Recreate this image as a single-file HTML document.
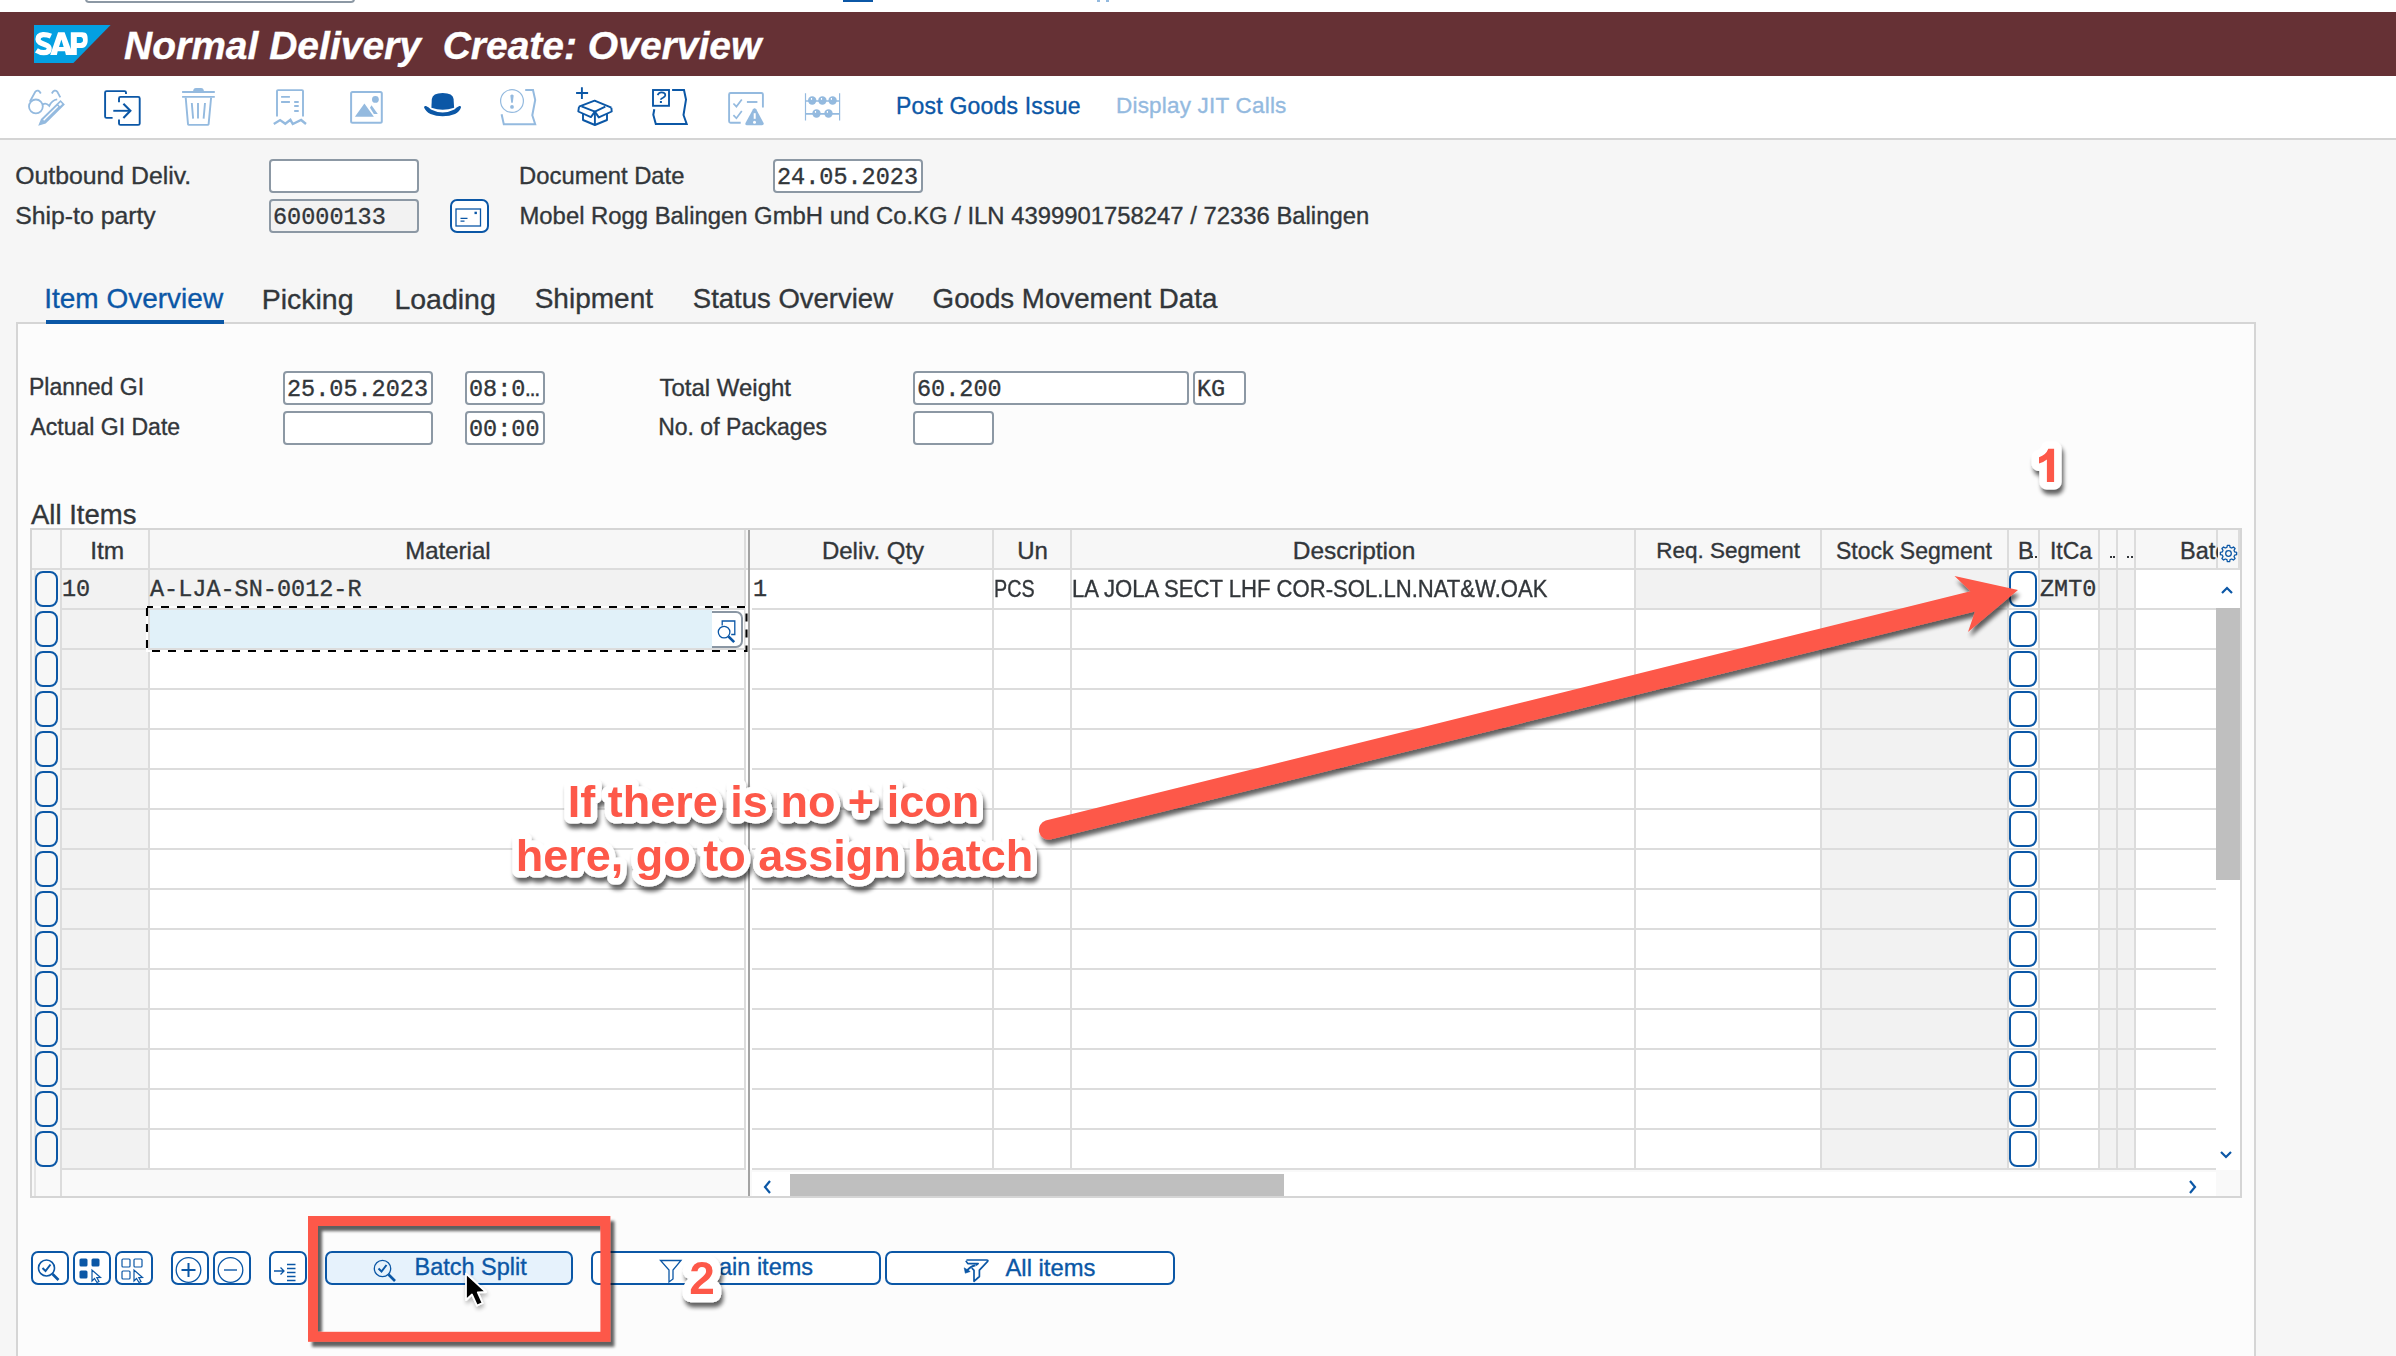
<!DOCTYPE html>
<html><head><meta charset="utf-8">
<style>
html,body{margin:0;padding:0;}
body{width:2396px;height:1356px;overflow:hidden;position:relative;background:#f6f6f6;font-family:'Liberation Sans', sans-serif;}
.t{position:absolute;white-space:nowrap;line-height:1;-webkit-text-stroke:0.35px currentColor;}
</style></head><body>
<div style="position:absolute;left:0px;top:0px;width:2396px;height:12px;background:#fff"></div>
<div style="position:absolute;left:85px;top:-20px;width:270px;height:23px;border:2px solid #8c98a4;border-radius:4px;background:#fff;box-sizing:border-box"></div>
<div style="position:absolute;left:843px;top:0px;width:30px;height:2px;background:#0b57a6"></div>
<div style="position:absolute;left:1097px;top:0px;width:3px;height:2px;background:#94badf"></div>
<div style="position:absolute;left:1106px;top:0px;width:3px;height:2px;background:#94badf"></div>
<div style="position:absolute;left:0px;top:12px;width:2396px;height:64px;background:#663135"></div>
<svg style="position:absolute;left:34px;top:25px" width="77" height="38" viewBox="0 0 77 38">
<polygon points="0,0 76.6,0 39.4,37.9 0,37.9" fill="#03a0e2"/>
<path fill="#fff" fill-rule="evenodd" d="M24.05 7.2 L30.6 7.2 L36.8 23.9 L36.8 7.2 L48.1 7.2 C53.5 7.2 53.7 10.5 53.7 15.1 C53.7 20.5 51 23 48.1 23 L42.8 23 L42.8 29.9 L31.9 29.9 L31 26.2 L23.7 26.2 L22.9 29.9 L16.2 29.9 Z M27.4 14.5 L25 21.9 L29.7 21.9 Z M42.8 12.1 L46.6 12.1 C48.3 12.1 49 13.5 49 15.1 C49 16.8 48.3 17.9 46.6 17.9 L42.8 17.9 Z"/>
<path fill="none" stroke="#fff" stroke-width="5.2" d="M16.9 11.2 C13.5 9.6 11 9.5 9 9.6 C5.5 9.9 4 11.8 4 14.3 C4 17 6 18 11.2 19.7 C14.8 20.9 15.3 22.2 15.2 24 C15 26.8 12.5 27.7 9.8 27.7 C7 27.7 4.5 26.8 2.4 25.4"/>
</svg>
<div class="t" style="left:124px;top:26px;font-size:39px;color:#fff;font-family:'Liberation Sans', sans-serif;font-weight:bold;font-style:italic;white-space:pre">Normal Delivery&nbsp; Create: Overview</div>
<div style="position:absolute;left:0px;top:76px;width:2396px;height:62px;background:#fff"></div>
<div style="position:absolute;left:0px;top:138px;width:2396px;height:2px;background:#d4d4d4"></div>
<svg style="position:absolute;left:24px;top:84px" width="46" height="46" viewBox="0 0 46 46" fill="none" stroke="#94badf" stroke-width="1.8">
<circle cx="11.9" cy="22.4" r="6.9"/><path d="M5.8 17.8 L11.4 7.6 Q14.2 4.8 16.8 9.5"/><path d="M27.8 9.5 Q30.5 4.8 33.2 7.6 L36.3 13.4"/>
<path d="M18.8 20.4 Q22 18.2 25.3 21.8 Q28 16 33.2 15.3"/>
<path d="M17 34.9 L36.5 15.9 L40.9 20.4 L21.7 39.5 L14.2 41.7 Z" fill="#94badf" stroke="none"/>
<path d="M19.6 36.2 L33.8 22.2" stroke="#fff" stroke-width="1.4"/><path d="M34.3 20.6 L36.6 18.3 L38.2 19.9 L35.9 22.2 Z" fill="#fff" stroke="none"/>
</svg>
<svg style="position:absolute;left:98px;top:84px" width="46" height="46" viewBox="0 0 46 46" fill="none" stroke="#0b57a6" stroke-width="1.9">
<path d="M14.6 33.9 H8.6 Q7.1 33.9 7.1 32.4 V8.6 Q7.1 7.1 8.6 7.1 H26.5 Q28 7.1 28 8.6 V10"/>
<path d="M21 18.3 V14.4 Q21 12.9 22.5 12.9 H40.2 Q41.7 12.9 41.7 14.4 V39.4 Q41.7 40.9 40.2 40.9 H22.5 Q21 40.9 21 39.4 V35.4"/>
<path d="M15.3 26.8 H32"/><path d="M25.4 19.7 L32.4 26.8 L25.4 34.1" stroke-width="2.1"/>
</svg>
<svg style="position:absolute;left:176px;top:84px" width="46" height="46" viewBox="0 0 46 46" fill="none" stroke="#94badf" stroke-width="1.9">
<path d="M6.1 8 H38.8 M6.1 12.9 H38.8"/><path d="M17 8.5 Q17 4.1 20 4.1 H25 Q28 4.1 28 8.5 Z" fill="#94badf" stroke="none"/>
<path d="M9.7 13.6 L12 40.2 Q12.2 40.9 13 40.9 H31.6 Q32.4 40.9 32.6 40.2 L35.1 13.6"/><path d="M15.8 19 L17.1 34.6 M22 19 V34.6 M29 19 L27.6 34.6"/>
</svg>
<svg style="position:absolute;left:266px;top:84px" width="46" height="46" viewBox="0 0 46 46" fill="none" stroke="#94badf" stroke-width="1.9">
<path d="M11 32.6 V7 Q11 6.1 12 6.1 H36 Q37 6.1 37 7 V32.6"/><path d="M15.1 12.9 H23.9 M15.1 18 H23.9 M28.2 18 H32.7 M28.2 22 H32.7 M28.2 27 H32.7"/>
<path d="M7.8 40 L14.1 36.1 L19.3 39.7 L24.4 35.8 L26.8 40 L35.1 36 L40 40" stroke-width="2.4"/>
</svg>
<svg style="position:absolute;left:344px;top:84px" width="46" height="46" viewBox="0 0 46 46" fill="none" stroke="#94badf" stroke-width="2">
<rect x="7.1" y="8" width="30.7" height="30.7" rx="1.5"/><circle cx="31.4" cy="15.4" r="3.4" fill="#94badf" stroke="none"/>
<path d="M10.9 32.7 L20.4 19.5 L29.9 32.7 Z" fill="#94badf" stroke="none"/><path d="M26 23.7 L27.5 21.2 L33.8 29.9 H29.9 Z" fill="#94badf" stroke="none"/>
</svg>
<svg style="position:absolute;left:420px;top:84px" width="46" height="46" viewBox="0 0 46 46" fill="none">
<path d="M11.4 23.7 L11.8 15 Q12.5 9 22.7 9 Q33 9 33.6 15 L34.1 23.7 Q22.7 28 11.4 23.7 Z" fill="#0b57a6"/>
<path d="M4 23.2 Q4.5 21.6 6 22 Q9 23 10.9 25.6 Q22.7 31.5 34.4 25.6 Q36.4 23 39.4 22 Q41 21.6 41 23.4 Q39.5 27.5 35 30 Q29.5 32.2 22.7 32.2 Q16 32.2 10.5 30 Q5.5 27.5 4 23.2 Z" fill="#0b57a6"/>
</svg>
<svg style="position:absolute;left:494px;top:84px" width="46" height="46" viewBox="0 0 46 46" fill="none" stroke="#94badf" stroke-width="2">
<circle cx="18" cy="17" r="11.4" stroke-width="1.2"/><path d="M16.3 11.5 Q18 9.5 19.7 11.5 L18.8 18.7 H17.2 Z" fill="#94badf" stroke="none"/><circle cx="18" cy="22.9" r="1.9" fill="#94badf" stroke="none"/>
<path d="M31.2 6.1 H39 L41.2 15.9 L38.3 31.2 L41.2 40.2 H9.8 L7.6 30.2"/>
</svg>
<svg style="position:absolute;left:570px;top:84px" width="46" height="46" viewBox="0 0 46 46" fill="none" stroke="#0b57a6" stroke-width="1.9" stroke-linejoin="round">
<path d="M11.9 3.2 V14.9 M6.1 9 H18.1"/>
<path d="M9 22.7 L24.6 16.6 L41.4 23.7"/><path d="M11.5 22.4 L24.9 27.6 L35.3 22.6"/>
<path d="M9 22.7 L8.3 27.5 L20.9 33.1 L24.9 27.6 L28.8 33.4 L41.7 27.5 L41.4 23.7"/>
<path d="M13 29.2 V36 L24.9 41 L37 36 V29.2 M24.9 27.6 V41"/>
</svg>
<svg style="position:absolute;left:646px;top:84px" width="46" height="46" viewBox="0 0 46 46" fill="none" stroke="#0b57a6" stroke-width="1.9">
<rect x="7" y="6" width="16" height="15.8"/><path d="M11.6 11.2 Q13 8.4 15.4 8.4 Q19.3 8.4 19.3 11.3 Q19.3 12.6 17 13.8 Q14.8 14.8 14.8 15.8" stroke-width="1.7"/><rect x="13.9" y="17" width="2" height="2" fill="#0b57a6" stroke="none"/>
<path d="M26.1 6.1 H38 L40 15.6 L37.5 31 L40.7 39.9 H9.8 L7.3 30.7 L8.3 25.3" stroke-width="2"/>
</svg>
<svg style="position:absolute;left:722px;top:84px" width="46" height="46" viewBox="0 0 46 46" fill="none" stroke="#94badf" stroke-width="1.9">
<path d="M18.7 38.8 H8.6 Q7.1 38.8 7.1 37.3 V10.5 Q7.1 9 8.6 9 H39.4 Q40.9 9 40.9 10.5 V23.6"/>
<path d="M11.4 19.5 L14.4 22.6 L19.8 15.4 M11.4 31.2 L14.4 34.3 L19.8 27.1" stroke-width="1.7"/><path d="M24.9 18 H35.4"/>
<path d="M31 25.3 Q32.6 23 34.2 25.3 L41.6 39 Q42.2 41.2 40 41.2 H25 Q22.8 41.2 23.5 39 Z" fill="#94badf" stroke="none"/>
<path d="M32.7 29.2 V34.8" stroke="#fff" stroke-width="2"/><circle cx="32.5" cy="38.3" r="1.5" fill="#fff" stroke="none"/>
</svg>
<svg style="position:absolute;left:798px;top:84px" width="46" height="46" viewBox="0 0 46 46" fill="none" stroke="#94badf" stroke-width="1.2">
<path d="M7.5 9.2 V36.6 M41.6 9.2 V36.6"/><path d="M7.5 17 H41.6 M7.5 29.9 H41.6" stroke-width="1.7"/>
<g fill="#94badf" stroke="none"><circle cx="14.2" cy="16.5" r="4.2"/><circle cx="24.4" cy="16.5" r="4.2"/><circle cx="34.6" cy="16.5" r="4.2"/><circle cx="18.5" cy="29.5" r="4.2"/><circle cx="30.5" cy="29.5" r="4.2"/></g>
<g fill="#fff" stroke="none"><rect x="12.9" y="14" width="1.2" height="1.8"/><rect x="22.9" y="14" width="1.2" height="1.8"/><rect x="32.8" y="14" width="1.2" height="1.8"/><rect x="16.9" y="27" width="1.2" height="1.8"/><rect x="28.8" y="27" width="1.2" height="1.8"/></g>
</svg>
<div class="t" style="left:896px;top:95px;font-size:23px;color:#0b57a6;font-family:'Liberation Sans', sans-serif;letter-spacing:0.2px">Post Goods Issue</div>
<div class="t" style="left:1116px;top:95px;font-size:22.5px;color:#94badf;font-family:'Liberation Sans', sans-serif;letter-spacing:0.2px">Display JIT Calls</div>
<div class="t" style="left:15.2px;top:164px;font-size:24.8px;color:#32363a;font-family:'Liberation Sans', sans-serif;">Outbound Deliv.</div>
<div class="t" style="left:15.2px;top:204px;font-size:24.8px;color:#32363a;font-family:'Liberation Sans', sans-serif;">Ship-to party</div>
<div style="position:absolute;left:269px;top:159px;width:150px;height:34px;box-sizing:border-box;border:2px solid #8c98a4;border-radius:4px;background:#fff"></div>
<div style="position:absolute;left:269px;top:199px;width:150px;height:34px;box-sizing:border-box;border:2px solid #8c98a4;border-radius:4px;background:#f2f2f2"></div>
<div class="t" style="left:273px;top:206px;font-size:23.5px;color:#32363a;font-family:'Liberation Mono', monospace;">60000133</div>
<div style="position:absolute;left:450px;top:199px;width:39px;height:34px;box-sizing:border-box;border:2px solid #0b57a6;border-radius:7px;background:#fff"></div>
<svg style="position:absolute;left:455px;top:208px" width="27" height="19" viewBox="0 0 27 19" fill="none" stroke="#0b57a6" stroke-width="1.3">
<rect x="1" y="1" width="24.5" height="17"/><path d="M5.5 10.3 H12.5 M5.5 13.2 H9.5"/><rect x="19.5" y="3.7" width="2.4" height="2.4" fill="#0b57a6" stroke="none"/></svg>
<div class="t" style="left:519.1px;top:164px;font-size:23.8px;color:#32363a;font-family:'Liberation Sans', sans-serif;">Document Date</div>
<div style="position:absolute;left:773px;top:159px;width:150px;height:34px;box-sizing:border-box;border:2px solid #8c98a4;border-radius:4px;background:#fff"></div>
<div class="t" style="left:777px;top:166px;font-size:23.5px;color:#32363a;font-family:'Liberation Mono', monospace;">24.05.2023</div>
<div class="t" style="left:519.5px;top:204px;font-size:23.85px;color:#32363a;font-family:'Liberation Sans', sans-serif;">Mobel Rogg Balingen GmbH und Co.KG / ILN 4399901758247 / 72336 Balingen</div>
<div class="t" style="left:44.2px;top:285.0px;font-size:28px;color:#0b57a6;font-family:'Liberation Sans', sans-serif;">Item Overview</div>
<div class="t" style="left:261.7px;top:284.575px;font-size:28.5px;color:#32363a;font-family:'Liberation Sans', sans-serif;">Picking</div>
<div class="t" style="left:394.4px;top:284.575px;font-size:28.5px;color:#32363a;font-family:'Liberation Sans', sans-serif;">Loading</div>
<div class="t" style="left:534.7px;top:285.0px;font-size:28px;color:#32363a;font-family:'Liberation Sans', sans-serif;">Shipment</div>
<div class="t" style="left:692.8px;top:285.425px;font-size:27.5px;color:#32363a;font-family:'Liberation Sans', sans-serif;">Status Overview</div>
<div class="t" style="left:932.6px;top:285.255px;font-size:27.7px;color:#32363a;font-family:'Liberation Sans', sans-serif;">Goods Movement Data</div>
<div style="position:absolute;left:16px;top:322px;width:2240px;height:1040px;box-sizing:border-box;border:2px solid #d5d5d5;background:#fcfcfc"></div>
<div style="position:absolute;left:46px;top:320px;width:178px;height:4px;background:#0b57a6"></div>
<div class="t" style="left:29px;top:376px;font-size:23px;color:#32363a;font-family:'Liberation Sans', sans-serif;">Planned GI</div>
<div class="t" style="left:30.5px;top:416px;font-size:23px;color:#32363a;font-family:'Liberation Sans', sans-serif;">Actual GI Date</div>
<div style="position:absolute;left:283px;top:371px;width:150px;height:34px;box-sizing:border-box;border:2px solid #8c98a4;border-radius:4px;background:#fff"></div>
<div class="t" style="left:287px;top:378px;font-size:23.5px;color:#32363a;font-family:'Liberation Mono', monospace;">25.05.2023</div>
<div style="position:absolute;left:465px;top:371px;width:80px;height:34px;box-sizing:border-box;border:2px solid #8c98a4;border-radius:4px;background:#fff"></div>
<div class="t" style="left:469px;top:378px;font-size:23.5px;color:#32363a;font-family:'Liberation Mono', monospace;">08:0…</div>
<div style="position:absolute;left:283px;top:411px;width:150px;height:34px;box-sizing:border-box;border:2px solid #8c98a4;border-radius:4px;background:#fff"></div>
<div style="position:absolute;left:465px;top:411px;width:80px;height:34px;box-sizing:border-box;border:2px solid #8c98a4;border-radius:4px;background:#fff"></div>
<div class="t" style="left:469px;top:418px;font-size:23.5px;color:#32363a;font-family:'Liberation Mono', monospace;">00:00</div>
<div class="t" style="left:659.4px;top:376px;font-size:24px;color:#32363a;font-family:'Liberation Sans', sans-serif;">Total Weight</div>
<div class="t" style="left:658.2px;top:416px;font-size:23px;color:#32363a;font-family:'Liberation Sans', sans-serif;">No. of Packages</div>
<div style="position:absolute;left:913px;top:371px;width:276px;height:34px;box-sizing:border-box;border:2px solid #8c98a4;border-radius:4px;background:#fff"></div>
<div class="t" style="left:917px;top:378px;font-size:23.5px;color:#32363a;font-family:'Liberation Mono', monospace;">60.200</div>
<div style="position:absolute;left:1193px;top:371px;width:53px;height:34px;box-sizing:border-box;border:2px solid #8c98a4;border-radius:4px;background:#fff"></div>
<div class="t" style="left:1197px;top:378px;font-size:23.5px;color:#32363a;font-family:'Liberation Mono', monospace;">KG</div>
<div style="position:absolute;left:913px;top:411px;width:81px;height:34px;box-sizing:border-box;border:2px solid #8c98a4;border-radius:4px;background:#fff"></div>
<div class="t" style="left:31px;top:501px;font-size:27.5px;color:#32363a;font-family:'Liberation Sans', sans-serif;">All Items</div>
<div style="position:absolute;left:30px;top:528px;width:2212px;height:670px;box-sizing:border-box;border:2px solid #d5d5d5;background:#fff"></div>
<div style="position:absolute;left:32px;top:530px;width:2208px;height:38px;background:#f7f7f7"></div>
<div style="position:absolute;left:32px;top:568px;width:2208px;height:2px;background:#dcdcdc"></div>
<div style="position:absolute;left:32px;top:1170px;width:2208px;height:26px;background:#f9f9f9"></div>
<div style="position:absolute;left:32px;top:570px;width:28px;height:600px;background:#f7f7f7"></div>
<div style="position:absolute;left:34px;top:570px;width:1.5px;height:626px;background:#e4e4e4"></div>
<div style="position:absolute;left:62px;top:570px;width:86px;height:600px;background:#f2f2f2"></div>
<div style="position:absolute;left:150px;top:570px;width:594px;height:40px;background:#f2f2f2"></div>
<div style="position:absolute;left:1636px;top:570px;width:184px;height:40px;background:#f2f2f2"></div>
<div style="position:absolute;left:1822px;top:570px;width:185px;height:600px;background:#f2f2f2"></div>
<div style="position:absolute;left:2040px;top:570px;width:58px;height:40px;background:#f2f2f2"></div>
<div style="position:absolute;left:2100px;top:570px;width:16px;height:600px;background:#f2f2f2"></div>
<div style="position:absolute;left:2118px;top:570px;width:16px;height:600px;background:#f2f2f2"></div>
<div style="position:absolute;left:752px;top:1170px;width:1464px;height:0px;background:#f2f2f2"></div>
<div style="position:absolute;left:62px;top:608px;width:683px;height:2px;background:#dcdcdc"></div>
<div style="position:absolute;left:752px;top:608px;width:1464px;height:2px;background:#dcdcdc"></div>
<div style="position:absolute;left:62px;top:648px;width:683px;height:2px;background:#dcdcdc"></div>
<div style="position:absolute;left:752px;top:648px;width:1464px;height:2px;background:#dcdcdc"></div>
<div style="position:absolute;left:62px;top:688px;width:683px;height:2px;background:#dcdcdc"></div>
<div style="position:absolute;left:752px;top:688px;width:1464px;height:2px;background:#dcdcdc"></div>
<div style="position:absolute;left:62px;top:728px;width:683px;height:2px;background:#dcdcdc"></div>
<div style="position:absolute;left:752px;top:728px;width:1464px;height:2px;background:#dcdcdc"></div>
<div style="position:absolute;left:62px;top:768px;width:683px;height:2px;background:#dcdcdc"></div>
<div style="position:absolute;left:752px;top:768px;width:1464px;height:2px;background:#dcdcdc"></div>
<div style="position:absolute;left:62px;top:808px;width:683px;height:2px;background:#dcdcdc"></div>
<div style="position:absolute;left:752px;top:808px;width:1464px;height:2px;background:#dcdcdc"></div>
<div style="position:absolute;left:62px;top:848px;width:683px;height:2px;background:#dcdcdc"></div>
<div style="position:absolute;left:752px;top:848px;width:1464px;height:2px;background:#dcdcdc"></div>
<div style="position:absolute;left:62px;top:888px;width:683px;height:2px;background:#dcdcdc"></div>
<div style="position:absolute;left:752px;top:888px;width:1464px;height:2px;background:#dcdcdc"></div>
<div style="position:absolute;left:62px;top:928px;width:683px;height:2px;background:#dcdcdc"></div>
<div style="position:absolute;left:752px;top:928px;width:1464px;height:2px;background:#dcdcdc"></div>
<div style="position:absolute;left:62px;top:968px;width:683px;height:2px;background:#dcdcdc"></div>
<div style="position:absolute;left:752px;top:968px;width:1464px;height:2px;background:#dcdcdc"></div>
<div style="position:absolute;left:62px;top:1008px;width:683px;height:2px;background:#dcdcdc"></div>
<div style="position:absolute;left:752px;top:1008px;width:1464px;height:2px;background:#dcdcdc"></div>
<div style="position:absolute;left:62px;top:1048px;width:683px;height:2px;background:#dcdcdc"></div>
<div style="position:absolute;left:752px;top:1048px;width:1464px;height:2px;background:#dcdcdc"></div>
<div style="position:absolute;left:62px;top:1088px;width:683px;height:2px;background:#dcdcdc"></div>
<div style="position:absolute;left:752px;top:1088px;width:1464px;height:2px;background:#dcdcdc"></div>
<div style="position:absolute;left:62px;top:1128px;width:683px;height:2px;background:#dcdcdc"></div>
<div style="position:absolute;left:752px;top:1128px;width:1464px;height:2px;background:#dcdcdc"></div>
<div style="position:absolute;left:62px;top:1168px;width:683px;height:2px;background:#dcdcdc"></div>
<div style="position:absolute;left:752px;top:1168px;width:1464px;height:2px;background:#dcdcdc"></div>
<div style="position:absolute;left:60px;top:530px;width:2px;height:666px;background:#dcdcdc"></div>
<div style="position:absolute;left:148px;top:530px;width:2px;height:640px;background:#dcdcdc"></div>
<div style="position:absolute;left:744px;top:530px;width:2px;height:640px;background:#dcdcdc"></div>
<div style="position:absolute;left:992px;top:530px;width:2px;height:640px;background:#dcdcdc"></div>
<div style="position:absolute;left:1070px;top:530px;width:2px;height:640px;background:#dcdcdc"></div>
<div style="position:absolute;left:1634px;top:530px;width:2px;height:640px;background:#dcdcdc"></div>
<div style="position:absolute;left:1820px;top:530px;width:2px;height:640px;background:#dcdcdc"></div>
<div style="position:absolute;left:2007px;top:530px;width:2px;height:640px;background:#dcdcdc"></div>
<div style="position:absolute;left:2038px;top:530px;width:2px;height:640px;background:#dcdcdc"></div>
<div style="position:absolute;left:2098px;top:530px;width:2px;height:640px;background:#dcdcdc"></div>
<div style="position:absolute;left:2116px;top:530px;width:2px;height:640px;background:#dcdcdc"></div>
<div style="position:absolute;left:2134px;top:530px;width:2px;height:640px;background:#dcdcdc"></div>
<div style="position:absolute;left:2216px;top:530px;width:2px;height:640px;background:#dcdcdc"></div>
<div style="position:absolute;left:2238px;top:530px;width:2px;height:38px;background:#dcdcdc"></div>
<div style="position:absolute;left:747.5px;top:530px;width:2.5px;height:666px;background:#a3a3a3"></div>
<div class="t" style="left:-292.8px;width:800px;text-align:center;top:538.65px;font-size:24.5px;color:#32363a;font-family:'Liberation Sans', sans-serif;">Itm</div>
<div class="t" style="left:47.89999999999998px;width:800px;text-align:center;top:539.075px;font-size:24px;color:#32363a;font-family:'Liberation Sans', sans-serif;">Material</div>
<div class="t" style="left:473px;width:800px;text-align:center;top:539.075px;font-size:24px;color:#32363a;font-family:'Liberation Sans', sans-serif;">Deliv. Qty</div>
<div class="t" style="left:632.5px;width:800px;text-align:center;top:539.075px;font-size:24px;color:#32363a;font-family:'Liberation Sans', sans-serif;">Un</div>
<div class="t" style="left:954px;width:800px;text-align:center;top:538.65px;font-size:24.5px;color:#32363a;font-family:'Liberation Sans', sans-serif;">Description</div>
<div class="t" style="left:1328.1px;width:800px;text-align:center;top:540.35px;font-size:22.5px;color:#32363a;font-family:'Liberation Sans', sans-serif;">Req. Segment</div>
<div class="t" style="left:1513.9px;width:800px;text-align:center;top:539.925px;font-size:23px;color:#32363a;font-family:'Liberation Sans', sans-serif;">Stock Segment</div>
<div class="t" style="left:1671px;width:800px;text-align:center;top:539.925px;font-size:23px;color:#32363a;font-family:'Liberation Sans', sans-serif;">ItCa</div>
<div class="t" style="left:2018px;top:539.5px;font-size:23px;color:#32363a;font-family:'Liberation Sans', sans-serif;">B</div>
<div style="position:absolute;left:2031px;top:556px;width:2px;height:2.2px;background:#32363a"></div>
<div style="position:absolute;left:2035px;top:556px;width:2px;height:2.2px;background:#32363a"></div>
<div style="position:absolute;left:2109.5px;top:556px;width:2px;height:2.2px;background:#32363a"></div>
<div style="position:absolute;left:2113px;top:556px;width:2px;height:2.2px;background:#32363a"></div>
<div style="position:absolute;left:2127px;top:556px;width:2px;height:2.2px;background:#32363a"></div>
<div style="position:absolute;left:2130.5px;top:556px;width:2px;height:2.2px;background:#32363a"></div>
<div style="position:absolute;left:2136px;top:530px;width:82px;height:38px;overflow:hidden"><div class="t" style="left:44px;top:9.5px;font-size:23.5px;color:#32363a">Batch</div></div>
<svg style="position:absolute;left:2219px;top:544px" width="19" height="19" viewBox="0 0 19 19" fill="none" stroke="#0b57a6" stroke-width="1.3" stroke-linejoin="round"><polygon points="17.62,8.34 17.62,10.66 15.70,11.09 15.01,12.76 16.06,14.42 14.42,16.06 12.76,15.01 11.09,15.70 10.66,17.62 8.34,17.62 7.91,15.70 6.24,15.01 4.58,16.06 2.94,14.42 3.99,12.76 3.30,11.09 1.38,10.66 1.38,8.34 3.30,7.91 3.99,6.24 2.94,4.58 4.58,2.94 6.24,3.99 7.91,3.30 8.34,1.38 10.66,1.38 11.09,3.30 12.76,3.99 14.42,2.94 16.06,4.58 15.01,6.24 15.70,7.91"/><circle cx="9.5" cy="9.5" r="2.8"/></svg>
<div style="position:absolute;left:34.5px;top:571px;width:23px;height:36px;box-sizing:border-box;border:2px solid #0b57a6;border-radius:8px;background:transparent"></div>
<div style="position:absolute;left:2009px;top:571px;width:28px;height:36px;box-sizing:border-box;border:2px solid #0b57a6;border-radius:8px;background:#fff"></div>
<div style="position:absolute;left:34.5px;top:611px;width:23px;height:36px;box-sizing:border-box;border:2px solid #0b57a6;border-radius:8px;background:transparent"></div>
<div style="position:absolute;left:2009px;top:611px;width:28px;height:36px;box-sizing:border-box;border:2px solid #0b57a6;border-radius:8px;background:#fff"></div>
<div style="position:absolute;left:34.5px;top:651px;width:23px;height:36px;box-sizing:border-box;border:2px solid #0b57a6;border-radius:8px;background:transparent"></div>
<div style="position:absolute;left:2009px;top:651px;width:28px;height:36px;box-sizing:border-box;border:2px solid #0b57a6;border-radius:8px;background:#fff"></div>
<div style="position:absolute;left:34.5px;top:691px;width:23px;height:36px;box-sizing:border-box;border:2px solid #0b57a6;border-radius:8px;background:transparent"></div>
<div style="position:absolute;left:2009px;top:691px;width:28px;height:36px;box-sizing:border-box;border:2px solid #0b57a6;border-radius:8px;background:#fff"></div>
<div style="position:absolute;left:34.5px;top:731px;width:23px;height:36px;box-sizing:border-box;border:2px solid #0b57a6;border-radius:8px;background:transparent"></div>
<div style="position:absolute;left:2009px;top:731px;width:28px;height:36px;box-sizing:border-box;border:2px solid #0b57a6;border-radius:8px;background:#fff"></div>
<div style="position:absolute;left:34.5px;top:771px;width:23px;height:36px;box-sizing:border-box;border:2px solid #0b57a6;border-radius:8px;background:transparent"></div>
<div style="position:absolute;left:2009px;top:771px;width:28px;height:36px;box-sizing:border-box;border:2px solid #0b57a6;border-radius:8px;background:#fff"></div>
<div style="position:absolute;left:34.5px;top:811px;width:23px;height:36px;box-sizing:border-box;border:2px solid #0b57a6;border-radius:8px;background:transparent"></div>
<div style="position:absolute;left:2009px;top:811px;width:28px;height:36px;box-sizing:border-box;border:2px solid #0b57a6;border-radius:8px;background:#fff"></div>
<div style="position:absolute;left:34.5px;top:851px;width:23px;height:36px;box-sizing:border-box;border:2px solid #0b57a6;border-radius:8px;background:transparent"></div>
<div style="position:absolute;left:2009px;top:851px;width:28px;height:36px;box-sizing:border-box;border:2px solid #0b57a6;border-radius:8px;background:#fff"></div>
<div style="position:absolute;left:34.5px;top:891px;width:23px;height:36px;box-sizing:border-box;border:2px solid #0b57a6;border-radius:8px;background:transparent"></div>
<div style="position:absolute;left:2009px;top:891px;width:28px;height:36px;box-sizing:border-box;border:2px solid #0b57a6;border-radius:8px;background:#fff"></div>
<div style="position:absolute;left:34.5px;top:931px;width:23px;height:36px;box-sizing:border-box;border:2px solid #0b57a6;border-radius:8px;background:transparent"></div>
<div style="position:absolute;left:2009px;top:931px;width:28px;height:36px;box-sizing:border-box;border:2px solid #0b57a6;border-radius:8px;background:#fff"></div>
<div style="position:absolute;left:34.5px;top:971px;width:23px;height:36px;box-sizing:border-box;border:2px solid #0b57a6;border-radius:8px;background:transparent"></div>
<div style="position:absolute;left:2009px;top:971px;width:28px;height:36px;box-sizing:border-box;border:2px solid #0b57a6;border-radius:8px;background:#fff"></div>
<div style="position:absolute;left:34.5px;top:1011px;width:23px;height:36px;box-sizing:border-box;border:2px solid #0b57a6;border-radius:8px;background:transparent"></div>
<div style="position:absolute;left:2009px;top:1011px;width:28px;height:36px;box-sizing:border-box;border:2px solid #0b57a6;border-radius:8px;background:#fff"></div>
<div style="position:absolute;left:34.5px;top:1051px;width:23px;height:36px;box-sizing:border-box;border:2px solid #0b57a6;border-radius:8px;background:transparent"></div>
<div style="position:absolute;left:2009px;top:1051px;width:28px;height:36px;box-sizing:border-box;border:2px solid #0b57a6;border-radius:8px;background:#fff"></div>
<div style="position:absolute;left:34.5px;top:1091px;width:23px;height:36px;box-sizing:border-box;border:2px solid #0b57a6;border-radius:8px;background:transparent"></div>
<div style="position:absolute;left:2009px;top:1091px;width:28px;height:36px;box-sizing:border-box;border:2px solid #0b57a6;border-radius:8px;background:#fff"></div>
<div style="position:absolute;left:34.5px;top:1131px;width:23px;height:36px;box-sizing:border-box;border:2px solid #0b57a6;border-radius:8px;background:transparent"></div>
<div style="position:absolute;left:2009px;top:1131px;width:28px;height:36px;box-sizing:border-box;border:2px solid #0b57a6;border-radius:8px;background:#fff"></div>
<div class="t" style="left:62px;top:578px;font-size:23.5px;color:#32363a;font-family:'Liberation Mono', monospace;">10</div>
<div class="t" style="left:150px;top:578px;font-size:23.5px;color:#32363a;font-family:'Liberation Mono', monospace;">A-LJA-SN-0012-R</div>
<div class="t" style="left:753px;top:578px;font-size:23.5px;color:#32363a;font-family:'Liberation Mono', monospace;">1</div>
<div class="t" style="left:993.5px;top:578px;font-size:23.5px;color:#32363a;font-family:'Liberation Sans', sans-serif;transform:scaleX(0.84);transform-origin:0 0">PCS</div>
<div class="t" style="left:1071.5px;top:578px;font-size:23.5px;color:#32363a;font-family:'Liberation Sans', sans-serif;transform:scaleX(0.94);transform-origin:0 0">LA JOLA SECT LHF COR-SOL.LN.NAT&amp;W.OAK</div>
<div class="t" style="left:2040px;top:578px;font-size:23.5px;color:#32363a;font-family:'Liberation Mono', monospace;">ZMT0</div>
<div style="position:absolute;left:150px;top:610px;width:562px;height:38px;background:#e1f1f9"></div>
<div style="position:absolute;left:712px;top:611px;width:31px;height:37px;box-sizing:border-box;border:2px solid #8a96a3;border-left:none;border-radius:0 7px 7px 0;background:#fff"></div>
<svg style="position:absolute;left:717px;top:619px" width="22" height="26" viewBox="0 0 22 26" fill="none" stroke="#0b57a6" stroke-width="1.3"><path d="M5.2 6.5 V2 H17.8 V15.5 H14.2"/><circle cx="7.1" cy="13.1" r="5.8"/><path d="M11.5 17.5 L17.2 23.2" stroke-width="2.6"/></svg>
<svg style="position:absolute;left:140px;top:600px" width="615" height="60" viewBox="140 600 615 60"><rect x="147" y="607" width="599.5" height="44" fill="none" stroke="#fff" stroke-width="2"/><rect x="147" y="607" width="599.5" height="44" fill="none" stroke="#000" stroke-width="2.1" stroke-dasharray="8 8" stroke-dashoffset="2"/></svg>
<div style="position:absolute;left:2216px;top:570px;width:24px;height:600px;background:#fff"></div>
<div style="position:absolute;left:2216px;top:608px;width:24px;height:272px;background:#bfbfbf"></div>
<svg style="position:absolute;left:2220px;top:585px" width="14" height="10" viewBox="0 0 14 10" fill="none" stroke="#0b57a6" stroke-width="2.2"><path d="M2 8 L7 3 L12 8"/></svg>
<svg style="position:absolute;left:2219px;top:1150px" width="14" height="10" viewBox="0 0 14 10" fill="none" stroke="#0b57a6" stroke-width="2.2"><path d="M2 2 L7 7 L12 2"/></svg>
<div style="position:absolute;left:752px;top:1172px;width:1464px;height:24px;background:#fff"></div>
<div style="position:absolute;left:790px;top:1174px;width:494px;height:22px;background:#bfbfbf"></div>
<svg style="position:absolute;left:762px;top:1179px" width="10" height="16" viewBox="0 0 10 16" fill="none" stroke="#0b57a6" stroke-width="2.2"><path d="M8 2 L3 8 L8 14"/></svg>
<svg style="position:absolute;left:2188px;top:1179px" width="10" height="16" viewBox="0 0 10 16" fill="none" stroke="#0b57a6" stroke-width="2.2"><path d="M2 2 L7 8 L2 14"/></svg>
<div style="position:absolute;left:30.5px;top:1251px;width:38px;height:34px;box-sizing:border-box;border:2px solid #0b57a6;border-radius:7px;background:#fff"></div>
<div style="position:absolute;left:72.5px;top:1251px;width:38px;height:34px;box-sizing:border-box;border:2px solid #0b57a6;border-radius:7px;background:#fff"></div>
<div style="position:absolute;left:114.5px;top:1251px;width:38px;height:34px;box-sizing:border-box;border:2px solid #0b57a6;border-radius:7px;background:#fff"></div>
<div style="position:absolute;left:170.5px;top:1251px;width:38px;height:34px;box-sizing:border-box;border:2px solid #0b57a6;border-radius:7px;background:#fff"></div>
<div style="position:absolute;left:212.5px;top:1251px;width:38px;height:34px;box-sizing:border-box;border:2px solid #0b57a6;border-radius:7px;background:#fff"></div>
<div style="position:absolute;left:268.5px;top:1251px;width:38px;height:34px;box-sizing:border-box;border:2px solid #0b57a6;border-radius:7px;background:#fff"></div>
<div style="position:absolute;left:325px;top:1251px;width:248px;height:34px;box-sizing:border-box;border:2px solid #0b57a6;border-radius:7px;background:#e6f2fc"></div>
<div style="position:absolute;left:591px;top:1251px;width:290px;height:34px;box-sizing:border-box;border:2px solid #0b57a6;border-radius:7px;background:#fff"></div>
<div style="position:absolute;left:885px;top:1251px;width:290px;height:34px;box-sizing:border-box;border:2px solid #0b57a6;border-radius:7px;background:#fff"></div>
<div class="t" style="left:414.5px;top:1256px;font-size:23.5px;color:#0b57a6;font-family:'Liberation Sans', sans-serif;">Batch Split</div>
<div class="t" style="left:719px;top:1256px;font-size:23.5px;color:#0b57a6;font-family:'Liberation Sans', sans-serif;">ain items</div>
<div class="t" style="left:1005.5px;top:1256px;font-size:23.8px;color:#0b57a6;font-family:'Liberation Sans', sans-serif;">All items</div>
<svg style="position:absolute;left:30px;top:1250px" width="1000" height="36" viewBox="30 1250 1000 36" fill="none" stroke="#0b57a6" stroke-width="1.6">
<circle cx="46.5" cy="1268" r="8"/><path d="M52.5 1274 L58.5 1280" stroke-width="2.6"/><path d="M42.5 1268 L45.5 1271 L50.5 1264.5" stroke-width="2"/>
<rect x="79.5" y="1258.5" width="8" height="8" rx="1.5" fill="#0b57a6" stroke="none"/><rect x="91.5" y="1258.5" width="8" height="8" rx="1.5" fill="#0b57a6" stroke="none"/><rect x="79.5" y="1270.5" width="8" height="8" rx="1.5" fill="#0b57a6" stroke="none"/>
<path d="M92 1270 L92 1281 L94.5 1278.5 L97 1282.5 L99 1281.5 L96.8 1277.6 L100.5 1277.5 Z" stroke-width="1.2" fill="#fff"/>
<rect x="122" y="1259" width="8" height="8" rx="1" stroke-width="1.2"/><rect x="134" y="1259" width="8" height="8" rx="1" stroke-width="1.2"/><rect x="122" y="1271" width="8" height="8" rx="1" stroke-width="1.2"/>
<path d="M134 1270 L134 1281 L136.5 1278.5 L139 1282.5 L141 1281.5 L138.8 1277.6 L142.5 1277.5 Z" stroke-width="1.2" fill="#fff"/>
<circle cx="188.5" cy="1270" r="12.3" stroke-width="1.3"/><path d="M181.5 1270 H195.5 M188.5 1263 V1277" stroke-width="2"/>
<circle cx="230.5" cy="1270" r="12.3" stroke-width="1.3"/><path d="M224 1270 H237" stroke-width="1.4"/>
<path d="M274 1271 H284 M280.5 1267.5 L284 1271 L280.5 1274.5" stroke-width="1.3"/><path d="M287 1264.5 H295.5 M287 1268.5 H295.5 M287 1272.5 H295.5 M287 1276.5 H295.5 M287 1280.5 H295.5" stroke-width="1.3"/>
<circle cx="382.5" cy="1268.5" r="8.2" stroke-width="1.3"/><path d="M388.5 1274.5 L395 1281" stroke-width="2.6"/><path d="M378.5 1268.5 L381.5 1271.5 L386.5 1265" stroke-width="2"/>
<path d="M660.5 1260.5 H681 L673 1270 V1279 L669 1282 V1270 Z" stroke-width="1.3"/>
<path d="M966.5 1260 H986.6 Q988.6 1260 987.4 1261.7 L979.4 1270.1 V1276.5 L974 1281.3 V1270.4 L971.8 1268" stroke-width="1.7" stroke-linejoin="round"/><path d="M965.8 1260.8 L967.8 1263.6 H978.2 L976 1265.3" stroke-width="1.6" stroke-linejoin="round"/><path d="M975.5 1265.2 Q970.5 1266.2 966.8 1270.8" stroke-width="1.9"/><path d="M964.2 1267.8 L965.3 1273.2 L970.2 1271.5 Z" fill="#0b57a6" stroke-width="0.6"/>
</svg>
<svg style="position:absolute;left:0;top:0" width="2396" height="1356" viewBox="0 0 2396 1356">
<defs>
<filter id="sh" filterUnits="userSpaceOnUse" x="0" y="0" width="2396" height="1356">
<feGaussianBlur in="SourceAlpha" stdDeviation="2.2"/><feOffset dx="2" dy="5" result="o"/>
<feComponentTransfer in="o" result="s"><feFuncA type="linear" slope="0.62"/></feComponentTransfer>
<feMerge><feMergeNode in="s"/><feMergeNode in="SourceGraphic"/></feMerge>
</filter>
<filter id="sh2" filterUnits="userSpaceOnUse" x="0" y="0" width="2396" height="1356">
<feGaussianBlur in="SourceAlpha" stdDeviation="1.6"/><feOffset dx="4" dy="5" result="o"/>
<feComponentTransfer in="o" result="s"><feFuncA type="linear" slope="0.62"/></feComponentTransfer>
<feMerge><feMergeNode in="s"/><feMergeNode in="SourceGraphic"/></feMerge>
</filter>
<filter id="sh3" filterUnits="userSpaceOnUse" x="0" y="0" width="2396" height="1356">
<feGaussianBlur in="SourceAlpha" stdDeviation="2"/><feOffset dx="1" dy="3" result="o"/>
<feComponentTransfer in="o" result="s"><feFuncA type="linear" slope="0.3"/></feComponentTransfer>
<feMerge><feMergeNode in="s"/><feMergeNode in="SourceGraphic"/></feMerge>
</filter>
</defs>
<path filter="url(#sh)" fill="#fd5849" d="M1045.7 820.6 L1970.5 591.3 L1954.5 576 L2018 590 L1968 632 L1975 611.4 L1050.3 839.4 A9.7 9.7 0 0 1 1045.7 820.6 Z"/>
<rect filter="url(#sh2)" x="313" y="1221" width="292.4" height="115.8" fill="none" stroke="#fd5849" stroke-width="10"/>
<g filter="url(#sh)" font-family="Liberation Sans" font-weight="bold" font-size="45.5" fill="#fd5849" stroke="#fff" stroke-width="13" stroke-linejoin="round" paint-order="stroke" text-anchor="middle">
<text x="773.5" y="817" font-size="45">If there is no + icon</text>
<text x="774.5" y="871" font-size="45">here, go to assign batch</text>
<text x="702" y="1294" font-size="46" stroke-width="16.5">2</text>
<path d="M2048.3 448.8 H2054.1 V481.9 H2046.9 V459.6 Q2043.5 462.5 2039 463.5 V457.3 Q2046 455 2048.3 448.8 Z" stroke-width="15"/>
</g>
<path filter="url(#sh3)" d="M466 1273.5 L466 1300 L472 1294.5 L477 1305.5 L482.5 1303 L477.8 1292.3 L486 1292 Z" fill="#000" stroke="#fff" stroke-width="1.8" stroke-linejoin="round"/>
</svg>
</body></html>
